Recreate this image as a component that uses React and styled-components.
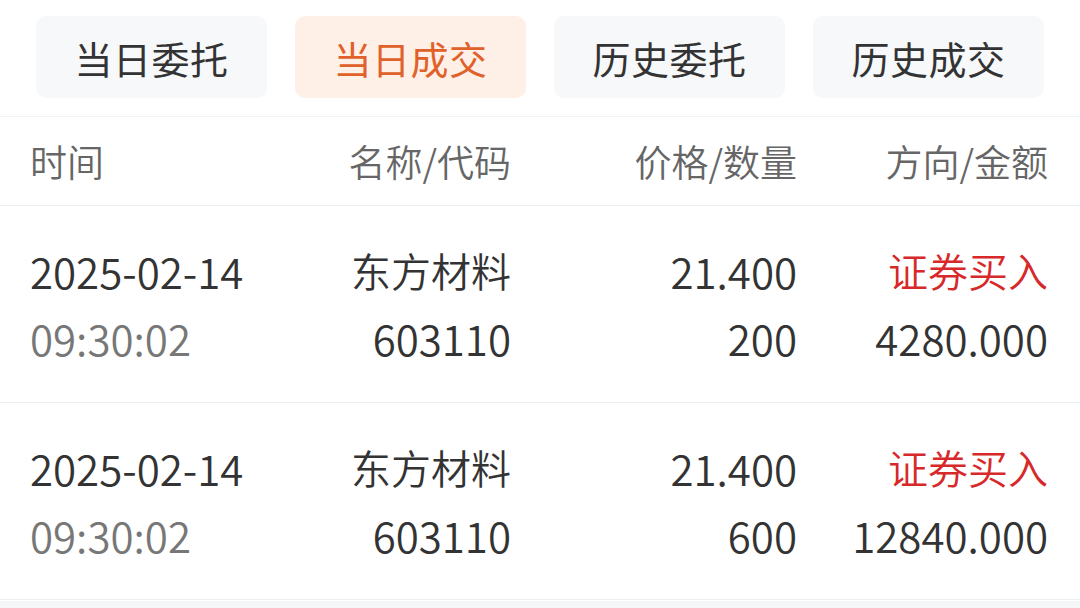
import React from "react";
import styled, { createGlobalStyle } from "styled-components";

const GlobalStyle = createGlobalStyle`
    html, body {
        margin: 0;
        padding: 0;
        background: #ffffff;
    }
    body {
        font-family: "Noto Sans CJK SC", "Noto Sans", sans-serif;
    }
`;

const tabs = ["当日委托", "当日成交", "历史委托", "历史成交"];

const trades = [
    { date: "2025-02-14", time: "09:30:02", name: "东方材料", code: "603110", price: "21.400", qty: "200", side: "证券买入", amount: "4280.000" },
    { date: "2025-02-14", time: "09:30:02", name: "东方材料", code: "603110", price: "21.400", qty: "600", side: "证券买入", amount: "12840.000" },
];

const App = () => {
    return (
        <Page>
            <GlobalStyle />
            <TabBar>
                {tabs.map((t, i) => (
                    <Tab key={t} $active={i === 1}>{t}</Tab>
                ))}
            </TabBar>
            <HeaderRow>
                <Cell $align="left">时间</Cell>
                <Cell>名称/代码</Cell>
                <Cell>价格/数量</Cell>
                <Cell>方向/金额</Cell>
            </HeaderRow>
            {trades.map((r, i) => (
                <TradeRow key={i}>
                    <Col $align="left">
                        <Line $num>{r.date}</Line>
                        <Line $num $muted>{r.time}</Line>
                    </Col>
                    <Col>
                        <Line>{r.name}</Line>
                        <Line $num>{r.code}</Line>
                    </Col>
                    <Col>
                        <Line $num>{r.price}</Line>
                        <Line $num>{r.qty}</Line>
                    </Col>
                    <Col>
                        <Line $red>{r.side}</Line>
                        <Line $num>{r.amount}</Line>
                    </Col>
                </TradeRow>
            ))}
            <Footer />
        </Page>
    );
};

const Page = styled.div`
    width: 1080px;
    height: 608px;
    overflow: hidden;
    background: #ffffff;
    display: flex;
    flex-direction: column;
`;

const TabBar = styled.div`
    display: grid;
    grid-template-columns: repeat(4, 1fr);
    gap: 28px;
    padding: 16px 36px 18px;
    border-bottom: 1px solid #f1f2f4;
`;

const Tab = styled.div`
    height: 82px;
    border-radius: 10px;
    display: flex;
    align-items: center;
    justify-content: center;
    font-size: 38px;
    letter-spacing: 0.5px;
    background: ${(p) => (p.$active ? "#fff0e7" : "#f7f8fa")};
    color: ${(p) => (p.$active ? "#e0612a" : "#333333")};
`;

const columns = `
    display: grid;
    grid-template-columns: 220px 261px 286px 251px;
    padding: 0 32px 0 30px;
`;

const HeaderRow = styled.div`
    ${columns}
    height: 88px;
    align-items: center;
    border-bottom: 1px solid #eeeff1;
`;

const Cell = styled.div`
    font-size: 37px;
    font-weight: 350;
    color: #666666;
    text-align: ${(p) => p.$align || "right"};
    white-space: nowrap;
`;

const TradeRow = styled.div`
    ${columns}
    padding-top: 31px;
    padding-bottom: 31px;
    border-bottom: 1px solid #eeeff1;
`;

const Col = styled.div`
    display: flex;
    flex-direction: column;
    align-items: ${(p) => (p.$align === "left" ? "flex-start" : "flex-end")};
`;

const Line = styled.div`
    font-size: ${(p) => (p.$num ? "42px" : "40px")};
    font-weight: 350;
    line-height: 67px;
    height: 67px;
    white-space: nowrap;
    color: ${(p) => (p.$red ? "#d7282a" : p.$muted ? "#777777" : "#333333")};
`;

const Footer = styled.div`
    flex: 1;
    margin-top: 1px;
    background: #f5f6f8;
`;

export default App;
